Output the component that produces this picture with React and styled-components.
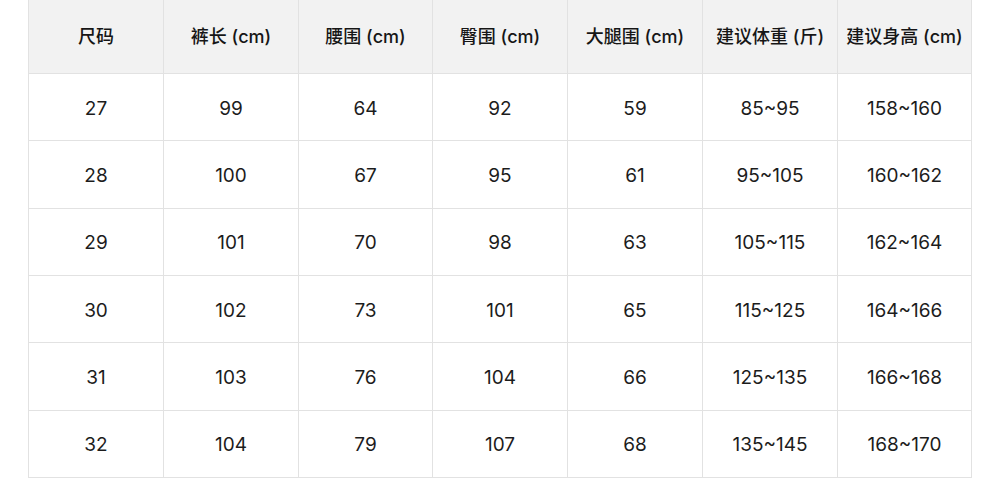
import styled, { createGlobalStyle } from "styled-components";

const GlobalStyle = createGlobalStyle`
  html, body {
    margin: 0;
    padding: 0;
    background: #ffffff;
  }
  body {
    font-family: Inter, "Noto Sans CJK SC", sans-serif;
    color: #1c1c1c;
  }
`;

const headers = [
  "尺码",
  "裤长 (cm)",
  "腰围 (cm)",
  "臀围 (cm)",
  "大腿围 (cm)",
  "建议体重 (斤)",
  "建议身高 (cm)",
];

const rows = [
  ["27", "99", "64", "92", "59", "85~95", "158~160"],
  ["28", "100", "67", "95", "61", "95~105", "160~162"],
  ["29", "101", "70", "98", "63", "105~115", "162~164"],
  ["30", "102", "73", "101", "65", "115~125", "164~166"],
  ["31", "103", "76", "104", "66", "125~135", "166~168"],
  ["32", "104", "79", "107", "68", "135~145", "168~170"],
];

const App = () => {
  return (
    <Page>
      <GlobalStyle />
      <SizeTable>
        {headers.map((h) => (
          <HeadCell key={h}>{h}</HeadCell>
        ))}
        {rows.map((row, i) =>
          row.map((val, j) => <Cell key={i + "-" + j}>{val}</Cell>)
        )}
      </SizeTable>
    </Page>
  );
};

const Page = styled.div`
  width: 1000px;
  height: 478px;
  padding-left: 28px;
  box-sizing: border-box;
  overflow: hidden;
`;

const SizeTable = styled.div`
  display: grid;
  width: 943px;
  grid-template-columns: 135px 135px 134px 135px 135px 135px 134px;
  grid-template-rows: 74px repeat(6, 67.33px);
  border-left: 1px solid #e2e2e2;
  box-sizing: border-box;
`;

const Cell = styled.div`
  display: flex;
  align-items: center;
  justify-content: center;
  border-right: 1px solid #e2e2e2;
  border-bottom: 1px solid #e2e2e2;
  font-size: 19px;
  color: #1c1c1c;
  background: #ffffff;
  padding-top: 2px;
`;

const HeadCell = styled(Cell)`
  background: #f2f2f2;
  font-size: 18px;
  font-weight: 500;
  color: #161616;
  padding-top: 0;
  padding-bottom: 3px;
`;

export default App;
